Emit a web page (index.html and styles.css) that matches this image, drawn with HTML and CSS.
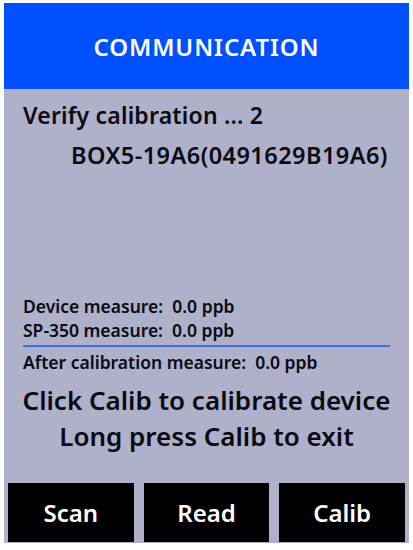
FILE: index.html
```html
<!DOCTYPE html>
<html>
<head>
<meta charset="utf-8">
<link rel="stylesheet" href="styles.css">
</head>
<body>
<div class="frame">
  <div class="header">COMMUNICATION</div>
  <div class="content">
    <div class="title">Verify calibration ... 2</div>
    <div class="device">BOX5-19A6(0491629B19A6)</div>
    <div class="spacer"></div>
    <div class="measure">Device measure:&nbsp; 0.0 ppb</div>
    <div class="measure">SP-350 measure:&nbsp; 0.0 ppb</div>
    <div class="divider"></div>
    <div class="measure after">After calibration measure:&nbsp; 0.0 ppb</div>
    <div class="hint first">Click Calib to calibrate device</div>
    <div class="hint">Long press Calib to exit</div>
  </div>
  <div class="buttons">
    <div class="btn">Scan</div>
    <div class="btn">Read</div>
    <div class="btn">Calib</div>
  </div>
</div>
</body>
</html>
```
FILE: styles.css
```css
html, body {
  margin: 0;
  padding: 0;
  background: #ffffff;
}
body {
  font-family: "Noto Sans", "Open Sans", sans-serif;
  font-weight: 600;
  color: #0a0a14;
}
.frame {
  margin: 3px 4px 0 4px;
  width: 405px;
  height: 540px;
  background: #aeb1c9;
  display: flex;
  flex-direction: column;
}
.header {
  height: 86px;
  flex: none;
  background: #0050ff;
  color: #ffffff;
  font-size: 24px;
  letter-spacing: 0.9px;
  display: flex;
  align-items: center;
  justify-content: center;
}
.content {
  flex: 1;
  display: flex;
  flex-direction: column;
  padding: 11px 19px 0 19px;
}
.title {
  font-size: 23px;
  line-height: 30px;
  letter-spacing: 0.2px;
}
.device {
  font-size: 23.5px;
  line-height: 30px;
  letter-spacing: 0.45px;
  margin-top: 10px;
  padding-left: 48px;
}
.spacer {
  height: 124px;
  flex: none;
}
.measure {
  font-size: 17.5px;
  line-height: 24px;
  white-space: nowrap;
}
.divider {
  height: 2px;
  flex: none;
  background: #3a70ee;
  margin-top: 3px;
  width: 367px;
}
.after {
  margin-top: 3px;
}
.hint {
  font-size: 26px;
  line-height: 36px;
  text-align: center;
  white-space: nowrap;
  margin: 0 -16px;
}
.first {
  margin-top: 8px;
}
.buttons {
  flex: none;
  display: flex;
  gap: 10px;
  padding: 0 4px 1px 4px;
  height: 59px;
}
.btn {
  flex: 1;
  background: #000000;
  color: #ffffff;
  font-size: 24px;
  display: flex;
  align-items: center;
  justify-content: center;
}
```
